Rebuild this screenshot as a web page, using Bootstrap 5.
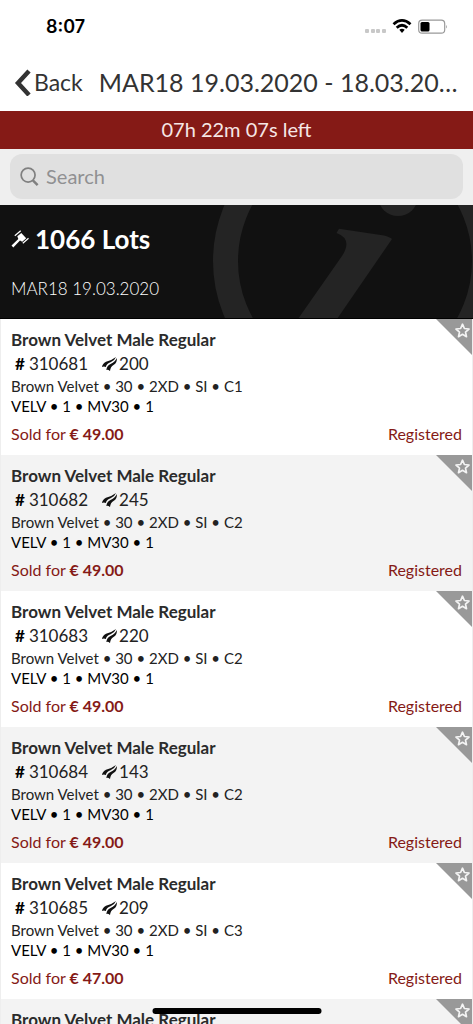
<!DOCTYPE html>
<html lang="en">
<head>
<meta charset="utf-8">
<meta name="viewport" content="width=device-width, initial-scale=1">
<title>Auction lots</title>
<link href="https://cdn.jsdelivr.net/npm/bootstrap@5.3.0/dist/css/bootstrap.min.css" rel="stylesheet">
<style>
  :root { --brand: #851a16; --ink: #333; }
  body { font-family: Lato, "Open Sans", sans-serif; color: #222; background: #fff; }
  .status-bar { height: 55px; padding: 0 26px 2px 46px; }
  .clock { font-family: Inter, sans-serif; font-size: 18px; font-weight: 600; color: #000; }
  .title-bar { height: 56px; padding: 0 12px 2px 14px; color: var(--ink); }
  .back-btn { font-size: 23px; line-height: 32px; color: var(--ink); }
  .page-title { font-size: 25px; line-height: 32px; }
  .countdown { background: var(--brand); color: #f6e6e5; font-size: 20px; line-height: 36px; padding-bottom: 2px; }
  .search-bar { background: #efefef; padding: 5px 10px 6px; }
  .search-box { background: #e0e0e0; border-radius: 12px; height: 45px; padding-left: 10px; color: #808080; }
  .search-box input, .search-box input:focus { background: transparent; font-size: 20px; padding: 0 6px 2px; color: #555; }
  .search-box input::placeholder { color: #909092; }
  .hero { background: #111; height: 114px; padding: 16px 11px; border-bottom: 1px solid #000; }
  .hero-art { right: 0; top: 0; }
  .lot-count { font-size: 26px; line-height: 36px; font-weight: 700; gap: 6px; }
  .sale-name { font-size: 17px; line-height: 24px; font-weight: 300; color: #fff; margin-top: 20px; }
  .lot { padding: 9px 10px; border: 0 solid #eee; border-width: 0 1px; min-height: 136px; }
  .lot:nth-child(even) { background: #f3f3f3; }
  .lot-name { font-size: 17px; line-height: 24px; font-weight: 700; color: #2b2b2b; }
  .lot-codes { font-size: 17px; line-height: 24px; padding-left: 4px; }
  .lot-qty { gap: 1px; margin-left: 14px; }
  .lot-spec { font-size: 15px; line-height: 20px; }
  .lot-foot { font-size: 16px; line-height: 24px; margin-top: 6px; color: var(--brand); }
  .fav { top: 0; right: 0; width: 36px; height: 36px; line-height: 0; }
  .home-indicator { width: 169px; height: 6px; bottom: 10px; background: #000; }
  .lots { overflow-y: auto; scrollbar-width: none; }
  .lots::-webkit-scrollbar { display: none; }
</style>
</head>
<body>
<svg class="d-none" aria-hidden="true">
  <symbol id="pelt" viewBox="0 0 16 16">
    <path d="M0 11Q0.500 7.500 4 5.800Q9.500 4.500 14 1Q12.500 4.800 8.500 6.300Q4.800 7.500 3.800 11Q2 10 0 11Z" fill="#111"/>
    <path d="M4.300 14Q5 9 9 7.700Q12.800 6.300 14.800 2Q15.500 6.500 11.500 9Q8.500 10.500 8 15Q6 13.400 4.300 14Z" fill="#111"/>
  </symbol>
  <symbol id="corner-star" viewBox="0 0 36 36">
    <path d="M0 0H36V36Z" fill="#999"/>
    <path d="M26.500 5.200L28.400 9.500L33 10L29.500 13.100L30.500 17.700L26.500 15.300L22.500 17.700L23.500 13.100L20 10L24.600 9.500Z" fill="none" stroke="#f4f4f4" stroke-width="1.700" stroke-linejoin="round"/>
  </symbol>
</svg>

<div class="vh-100 d-flex flex-column overflow-hidden">
  <header class="flex-shrink-0">
    <div class="status-bar d-flex align-items-center justify-content-between">
      <span class="clock">8:07</span>
      <svg width="83" height="18" viewBox="0 0 83 18" aria-hidden="true">
        <g fill="#c8c8c8"><rect x="1" y="11" width="4" height="4" rx="1"/><rect x="7" y="11" width="4" height="4" rx="1"/><rect x="12" y="11" width="4" height="4" rx="1"/><rect x="18" y="11" width="4" height="4" rx="1"/></g>
        <g fill="none" stroke="#000" stroke-width="2.800"><path d="M29.500 6.200Q38 -1.400 46.500 6.200"/><path d="M32.700 9.700Q38 4.800 43.300 9.700"/></g>
        <path d="M35.300 11.800Q38 9.600 40.700 11.800L38 15Z"/>
        <rect x="54.700" y="2.200" width="26" height="13" rx="3.500" fill="none" stroke="#999" stroke-width="1.200"/>
        <rect x="56.500" y="4" width="9" height="9.500" rx="1.500"/>
        <path d="M82 7Q83.600 8.600 82 10.500Z" fill="#999"/>
      </svg>
    </div>
    <nav class="title-bar d-flex align-items-center" aria-label="Page">
      <button type="button" class="back-btn btn p-0 border-0 d-flex align-items-center flex-shrink-0">
        <svg width="20" height="28" viewBox="0 0 20 28" aria-hidden="true"><path d="M15 3L4 15L15 27" fill="none" stroke="#333" stroke-width="4.500"/></svg>
        Back
      </button>
      <h1 class="page-title flex-fill text-truncate fw-normal mb-0 ms-3">MAR18 19.03.2020 - 18.03.20…</h1>
    </nav>
    <div class="countdown text-center">07h 22m 07s left</div>
    <form class="search-bar" role="search">
      <div class="search-box d-flex align-items-center">
        <svg width="21" height="22" viewBox="0 0 21 22" fill="none" stroke="currentColor" aria-hidden="true"><circle cx="8.500" cy="9" r="7.300" stroke-width="1.800"/><path d="M13.500 14.500L18.500 19.500" stroke-width="2.600"/></svg>
        <input type="search" class="form-control border-0 shadow-none" placeholder="Search" aria-label="Search">
      </div>
    </form>
  </header>

  <section class="hero position-relative overflow-hidden text-white flex-shrink-0">
    <svg class="hero-art position-absolute" width="260" height="114" viewBox="213 205 260 114" aria-hidden="true">
      <circle cx="355" cy="261" r="129.500" fill="none" stroke="#242424" stroke-width="25"/>
      <circle cx="398" cy="196" r="20" fill="#242424"/>
      <path d="M339 228.700L384 235.500Q390 237 392 239L337 319H298L342 256Q353 239 336.500 233Z" fill="#242424"/>
    </svg>
    <div class="position-relative">
      <h2 class="lot-count d-flex align-items-center mb-0">
        <svg width="18" height="18" viewBox="0 0 18 18" fill="#fff" aria-hidden="true">
          <path d="M6.300 6.300L10.300 2.900L15.200 8.300L11.200 11.700L9 10.600L2.300 17.500L0.500 15.600L7.300 9Z"/>
          <path d="M3.800 5.700L9.700 0.700M11.800 13.200L17.500 8.200" fill="none" stroke="#fff" stroke-width="1.200"/>
        </svg>1066 Lots
      </h2>
      <div class="sale-name">MAR18 19.03.2020</div>
    </div>
  </section>

  <main class="lots flex-fill" id="lots"></main>
</div>
<div class="home-indicator position-fixed start-50 translate-middle-x rounded-pill"></div>

<script>
  const lots = [
    ['310681', '200', 'C1', '49.00'],
    ['310682', '245', 'C2', '49.00'],
    ['310683', '220', 'C2', '49.00'],
    ['310684', '143', 'C2', '49.00'],
    ['310685', '209', 'C3', '47.00'],
    ['310686', '', '', '']
  ];
  document.getElementById('lots').innerHTML = lots.map(([id, qty, grade, price]) => `
    <article class="lot position-relative">
      <h3 class="lot-name mb-0">Brown Velvet Male Regular</h3>
      ${qty ? `
      <div class="lot-codes d-flex align-items-center">
        <b class="me-1 text-black">#</b><span>${id}</span>
        <span class="lot-qty d-flex align-items-center"><svg width="16" height="16" aria-hidden="true"><use href="#pelt"/></svg>${qty}</span>
      </div>
      <div class="lot-spec">Brown Velvet • 30 • 2XD • SI • ${grade}</div>
      <div class="lot-spec text-black">VELV • 1 • MV30 • 1</div>
      <div class="lot-foot d-flex justify-content-between"><span>Sold for <b>€ ${price}</b></span><span>Registered</span></div>` : ''}
      <button type="button" class="fav btn p-0 border-0 rounded-0 position-absolute" aria-label="Add to favourites"><svg width="36" height="36" aria-hidden="true"><use href="#corner-star"/></svg></button>
    </article>`).join('');
</script>
<script src="https://cdn.jsdelivr.net/npm/bootstrap@5.3.0/dist/js/bootstrap.bundle.min.js"></script>
</body>
</html>
